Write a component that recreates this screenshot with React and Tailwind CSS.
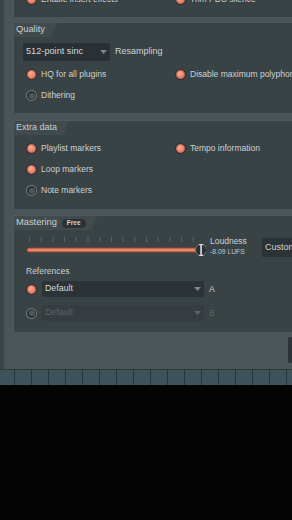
import React from "react";

const font = { fontFamily: '"Liberation Sans", Arial, sans-serif' };

const Radio = ({ on }) =>
  on ? (
    <span className="w-[11px] h-[11px] shrink-0 rounded-full border border-[#25292b] bg-[#c56a57] flex items-center justify-center">
      <span className="w-[7px] h-[7px] rounded-full bg-[radial-gradient(circle_at_40%_35%,#f9ad95,#e3684f)]" />
    </span>
  ) : (
    <span className="w-[11px] h-[11px] shrink-0 rounded-full border border-[#7a8386] bg-[#2b3133] flex items-center justify-center">
      <span className="w-[6px] h-[6px] rounded-full bg-[#4f585b]" />
    </span>
  );

const Option = ({ on, label }) => (
  <div className="h-[21px] flex items-center gap-[4px] whitespace-nowrap">
    <Radio on={on} />
    <span className="text-[8.5px] text-[#cdd2d2]">{label}</span>
  </div>
);

const Tab = ({ children }) => (
  <div className="h-[14px] flex">
    <div className="h-full bg-[#414a4d] pl-[2px] pr-[12px] flex items-center gap-[5px] [clip-path:polygon(0_0,100%_0,calc(100%-6px)_100%,0_100%)]">
      {children}
    </div>
  </div>
);

const Caret = ({ color = "#7d8688" }) => (
  <svg width="7" height="4" viewBox="0 0 7 4">
    <path d="M0 0h7L3.5 4z" fill={color} />
  </svg>
);

const Slider = () => (
  <svg className="shrink-0" width="180" height="24" viewBox="0 0 180 24">
    {Array.from({ length: 15 }).map((_, i) => (
      <rect key={i} x={3 + i * 11.7} y="1" width="1" height="5" fill="#5c666a" />
    ))}
    <rect x="0.5" y="11.5" width="173" height="5" rx="2.5" fill="#8d4434" />
    <rect x="1.5" y="12.5" width="171" height="3" rx="1.5" fill="#ec8565" />
    <circle cx="175" cy="14" r="5.5" fill="#283033" stroke="#6b767c" strokeWidth="1" />
    <rect x="174.3" y="8" width="1.6" height="12" fill="#dfe3e4" />
    <rect x="173" y="8" width="4.2" height="1" fill="#dfe3e4" />
    <rect x="173" y="19" width="4.2" height="1" fill="#dfe3e4" />
  </svg>
);

const RefRow = ({ on, letter }) => (
  <div className="h-[16px] flex items-center pl-[12px]">
    <Radio on={on} />
    <div
      className={`ml-[5px] w-[162px] shrink-0 h-full flex items-center justify-between pl-[3px] pr-[3px] ${
        on ? "bg-[#2c3336]" : "bg-[#353d40]"
      }`}
    >
      <span className={`text-[8.8px] ${on ? "text-[#d4d8d8]" : "text-[#59626a]"}`}>Default</span>
      <Caret color={on ? "#7d8688" : "#5a6366"} />
    </div>
    <span className={`ml-[5px] text-[8.5px] ${on ? "text-[#cdd2d2]" : "text-[#5d666a]"}`}>{letter}</span>
  </div>
);

export default function App() {
  return (
    <div className="w-[292px] h-[520px] bg-[#040404] overflow-hidden" style={font}>
      <div className="h-[369px] flex bg-[#4a5558]">
        <div className="w-[4px] shrink-0 bg-[#3a4547]" />
        <div className="flex-1 min-w-0 flex flex-col pl-[9px]">
          {/* cut-off section */}
          <div className="h-[17px] overflow-hidden bg-[#394245] border-l border-[#4f595c]">
            <div className="mt-[-11px] grid grid-cols-[149px_1fr] pl-[12px]">
              <Option on label="Enable insert effects" />
              <Option on label="Trim PDC silence" />
            </div>
          </div>

          {/* Quality */}
          <div className="mt-[5px] bg-[#394245] border-t border-l border-[#4f595c]">
            <Tab>
              <span className="text-[9.3px] text-[#cbd0d0]">Quality</span>
            </Tab>
            <div className="mt-[6px] h-[18px] flex items-center pl-[9px]">
              <div className="w-[87px] shrink-0 h-full bg-[#2a3134] flex items-center justify-between pl-[3px] pr-[3px]">
                <span className="text-[9.2px] text-[#d3d7d7]">512-point sinc</span>
                <Caret />
              </div>
              <span className="ml-[5px] text-[9px] text-[#cdd2d2]">Resampling</span>
            </div>
            <div className="mt-[3px] pb-[7px] grid grid-cols-[149px_1fr] pl-[12px]">
              <Option on label="HQ for all plugins" />
              <Option on label="Disable maximum polyphony" />
              <Option label="Dithering" />
            </div>
          </div>

          {/* Extra data */}
          <div className="mt-[7px] bg-[#394245] border-t border-l border-[#4f595c]">
            <Tab>
              <span className="text-[9px] text-[#cbd0d0]">Extra data</span>
            </Tab>
            <div className="mt-[3px] pb-[8px] grid grid-cols-[149px_1fr] pl-[12px]">
              <Option on label="Playlist markers" />
              <Option on label="Tempo information" />
              <Option on label="Loop markers" />
              <div />
              <Option label="Note markers" />
            </div>
          </div>

          {/* Mastering */}
          <div className="mt-[6px] pb-[11px] bg-[#394245] border-t border-l border-[#4f595c]">
            <Tab>
              <span className="text-[9.3px] text-[#cbd0d0]">Mastering</span>
              <span className="h-[9px] px-[5px] rounded-full bg-[#2a3235] text-[6.5px] font-bold text-[#cfd4d4] flex items-center">
                Free
              </span>
            </Tab>
            <div className="mt-[6px] h-[24px] flex pl-[12px]">
              <Slider />
              <div className="w-[56px] shrink-0 pl-[4px] flex flex-col">
                <span className="text-[8.5px] leading-[11px] text-[#cdd2d2]">Loudness</span>
                <span className="text-[6.8px] leading-[9px] text-[#c3c9c9]">-8.09 LUFS</span>
              </div>
              <div className="mt-[2px] h-[19px] w-[40px] shrink-0 bg-[#2b3336] pl-[3px] flex items-center">
                <span className="text-[9px] text-[#cfd4d4] whitespace-nowrap">Custom</span>
              </div>
            </div>
            <div className="mt-[5px] h-[12px] flex items-center pl-[12px]">
              <span className="text-[8.5px] text-[#cdd2d2]">References</span>
            </div>
            <div className="mt-[4px]">
              <RefRow on letter="A" />
            </div>
            <div className="mt-[8px]">
              <RefRow letter="B" />
            </div>
          </div>

          {/* lower empty area */}
          <div className="flex-1 flex justify-end">
            <div className="mt-[5px] w-[4px] h-[26px] rounded-l-[2px] bg-[#2c3437]" />
          </div>
        </div>
      </div>

      {/* key strip */}
      <div className="h-[16px] flex bg-[#3e5259] border-t border-[#2d3b3f]">
        <div className="w-[15px] shrink-0 border-r border-[#26343a]" />
        {Array.from({ length: 17 }).map((_, i) => (
          <div key={i} className="w-[17px] shrink-0 border-r border-[#26343a]" />
        ))}
      </div>
    </div>
  );
}
